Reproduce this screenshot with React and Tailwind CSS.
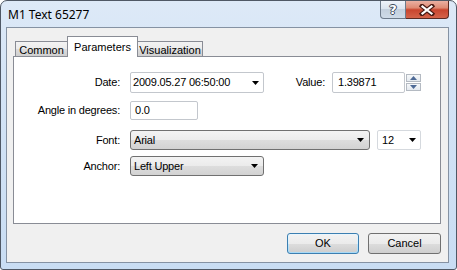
const Tri = ({ className = "" }) => (
  <svg width="7" height="4" viewBox="0 0 7 4" className={className}>
    <path d="M0 0H7L3.5 4Z" fill="#000" />
  </svg>
);

const SpinTri = ({ up }) => (
  <svg width="7" height="4" viewBox="0 0 7 4">
    <path d={up ? "M0 4H7L3.5 0Z" : "M0 0H7L3.5 4Z"} fill="#4e6a96" />
  </svg>
);

const Label = ({ children, className = "" }) => (
  <div className={"text-right " + className}>{children}</div>
);

export default function App() {
  const font = { fontFamily: '"Liberation Sans", Arial, sans-serif' };
  return (
    <div className="w-[457px] h-[270px] bg-white overflow-hidden">
      <div className="relative w-[457px] h-[270px] rounded-t-[7px] rounded-b-[3px] border border-[#4f5865] bg-[linear-gradient(180deg,#dde9f7_0%,#d4e4f6_30%,#c9ddf3_100%)] flex flex-col">
        {/* title bar */}
        <div className="h-[26px] shrink-0 pl-[7px] pt-[6px] text-[12px] leading-[16px] text-black" style={{ fontFamily: '"Noto Sans", "Open Sans", sans-serif' }}>
          M1 Text 65277
        </div>
        {/* caption buttons */}
        <div className="absolute top-0 right-[7px] flex h-[18px]">
          <div className="w-[26px] h-[18px] rounded-bl-[4px] border border-t-0 border-[#6d7a8a] bg-[linear-gradient(180deg,#eef3fa_0%,#dbe4ef_45%,#c3cfdd_50%,#cfdbe8_100%)] flex items-center justify-center">
            <span className="text-[13px] leading-[13px] font-bold text-white" style={{ fontFamily: '"DejaVu Sans", sans-serif', textShadow: "1px 0 #3d4a5c, -1px 0 #3d4a5c, 0 1px #3d4a5c, 0 -1px #3d4a5c" }}>?</span>
          </div>
          <div className="w-[43px] h-[18px] rounded-br-[4px] border border-t-0 border-l-0 border-[#5a2a22] bg-[linear-gradient(180deg,#eab0a2_0%,#de8a74_40%,#c9452e_52%,#d4634a_100%)] flex items-center justify-center">
            <svg width="16" height="12" viewBox="0 0 16 12">
              <path d="M3 2L13 10M13 2L3 10" stroke="#4a1b14" strokeWidth="4.5" strokeLinecap="square" />
              <path d="M3.5 2.5L12.5 9.5M12.5 2.5L3.5 9.5" stroke="#fff" strokeWidth="2.2" strokeLinecap="square" />
            </svg>
          </div>
        </div>
        {/* client area */}
        <div className="ml-[5px] mr-[7px] h-[236px] border border-[#8592a3] bg-[#f0f0f0] flex flex-col" style={font}>
          <div className="pt-[8px] pl-[6px] pr-[7px]">
            {/* tabs */}
            <div className="h-[20px] flex items-end pl-[2px] text-[11px] text-black">
              <div className="w-[53px] h-[15px] border border-b-0 border-[#898c95] bg-[linear-gradient(180deg,#f3f3f3_0%,#ebebeb_50%,#dddddd_51%,#cfcfcf_100%)] flex items-center justify-center leading-[12px] pt-[1px]">
                Common
              </div>
              <div className="relative z-10 -ml-[1px] -mb-[1px] w-[71px] h-[21px] border border-b-0 border-[#898c95] bg-white flex justify-center leading-[12px] pt-[4px]">
                Parameters
              </div>
              <div className="-ml-[1px] w-[66px] h-[15px] border border-b-0 border-[#898c95] bg-[linear-gradient(180deg,#f3f3f3_0%,#ebebeb_50%,#dddddd_51%,#cfcfcf_100%)] flex items-center justify-center leading-[12px] pt-[1px]">
                Visualization
              </div>
            </div>
            {/* panel */}
            <div className="h-[168px] border border-[#898c95] bg-white pt-[15px] text-[11px] text-black tracking-[-0.2px]">
              {/* row 1 */}
              <div className="flex items-center h-[21px]">
                <Label className="w-[116px] pr-[10px]">Date:</Label>
                <div className="w-[134px] h-[21px] rounded-[2px] border border-[#c3c7cd] bg-white flex items-center pl-[2px] pr-[4px]">
                  <span className="flex-1">2009.05.27 06:50:00</span>
                  <Tri />
                </div>
                <Label className="w-[68px] pr-[7px]">Value:</Label>
                <div className="w-[73px] h-[21px] rounded-[2px] border border-[#c3c7cd] bg-white flex items-center pl-[5px]">
                  1.39871
                </div>
                <div className="ml-[1px] w-[15px] h-[17px] flex flex-col gap-[1px]">
                  <div className="h-[8px] border border-[#b4bac2] bg-[linear-gradient(180deg,#f6f8fa,#e4e9ef)] flex items-center justify-center"><SpinTri up /></div>
                  <div className="h-[8px] border border-[#b4bac2] bg-[linear-gradient(180deg,#f6f8fa,#e4e9ef)] flex items-center justify-center"><SpinTri /></div>
                </div>
              </div>
              {/* row 2 */}
              <div className="flex items-center h-[19px] mt-[8px]">
                <Label className="w-[116px] pr-[10px]">Angle in degrees:</Label>
                <div className="w-[68px] h-[19px] rounded-[2px] border border-[#c3c7cd] bg-white flex items-center pl-[4px]">
                  0.0
                </div>
              </div>
              {/* row 3 */}
              <div className="flex items-center h-[20px] mt-[10px]">
                <Label className="w-[116px] pr-[10px]">Font:</Label>
                <div className="w-[240px] h-[20px] rounded-[3px] border border-[#707070] bg-[linear-gradient(180deg,#f3f3f3_0%,#ebebeb_50%,#dddddd_51%,#d2d2d2_100%)] flex items-center pl-[3px] pr-[5px]">
                  <span className="flex-1">Arial</span>
                  <Tri />
                </div>
                <div className="ml-[7px] w-[44px] h-[20px] rounded-[2px] border border-[#d5d9de] bg-white flex items-center pl-[4px] pr-[4px]">
                  <span className="flex-1">12</span>
                  <Tri />
                </div>
              </div>
              {/* row 4 */}
              <div className="flex items-center h-[20px] mt-[6px]">
                <Label className="w-[116px] pr-[10px]">Anchor:</Label>
                <div className="w-[134px] h-[20px] rounded-[3px] border border-[#707070] bg-[linear-gradient(180deg,#f3f3f3_0%,#ebebeb_50%,#dddddd_51%,#d2d2d2_100%)] flex items-center pl-[3px] pr-[5px]">
                  <span className="flex-1">Left Upper</span>
                  <Tri />
                </div>
              </div>
            </div>
          </div>
          {/* buttons */}
          <div className="flex justify-end pr-[7px] mt-[9px] text-[11px] text-black">
            <div className="w-[72px] h-[21px] rounded-[3px] border border-[#3c7fb1] bg-[linear-gradient(180deg,#eaf6fd_0%,#d9f0fc_50%,#bee6fd_51%,#a7d9f5_100%)] p-[1px]">
              <div className="w-full h-full rounded-[2px] bg-[linear-gradient(180deg,#f2f2f2_0%,#ebebeb_50%,#dddddd_51%,#cfcfcf_100%)] flex items-center justify-center">OK</div>
            </div>
            <div className="ml-[9px] w-[73px] h-[21px] rounded-[3px] border border-[#707070] bg-[linear-gradient(180deg,#f2f2f2_0%,#ebebeb_50%,#dddddd_51%,#cfcfcf_100%)] flex items-center justify-center">
              Cancel
            </div>
          </div>
        </div>
      </div>
    </div>
  );
}
